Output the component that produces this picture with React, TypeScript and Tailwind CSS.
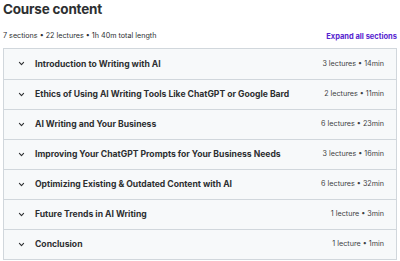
import React from "react";

const sections = [
  { title: "Introduction to Writing with AI", meta: "3 lectures • 14min" },
  { title: "Ethics of Using AI Writing Tools Like ChatGPT or Google Bard", meta: "2 lectures • 11min" },
  { title: "AI Writing and Your Business", meta: "6 lectures • 23min" },
  { title: "Improving Your ChatGPT Prompts for Your Business Needs", meta: "3 lectures • 16min" },
  { title: "Optimizing Existing & Outdated Content with AI", meta: "6 lectures • 32min" },
  { title: "Future Trends in AI Writing", meta: "1 lecture • 3min" },
  { title: "Conclusion", meta: "1 lecture • 1min" },
];

const Chevron = () => (
  <svg width="7" height="7" viewBox="0 0 10 10" fill="none">
    <path d="M2 3.5 L5 6.5 L8 3.5" stroke="#2d2f31" strokeWidth="1.6" strokeLinecap="round" strokeLinejoin="round" />
  </svg>
);

export default function App() {
  return (
    <div className="w-[400px] h-[261px] bg-white px-[3px] text-[#2d2f31] overflow-hidden" style={{ fontFamily: "Inter, 'Liberation Sans', sans-serif" }}>
      <h2 className="text-[13.5px] font-bold leading-[18px] tracking-[-0.2px]">Course content</h2>
      <div className="flex items-end justify-between mt-[13px] h-[11px]">
        <span className="text-[7.2px] text-[#2d2f31]">7 sections • 22 lectures • 1h 40m total length</span>
        <span className="text-[7.5px] font-bold text-[#5624d0]">Expand all sections</span>
      </div>
      <div className="mt-[6px] border border-[#d1d7dc] w-[394px]">
        {sections.map((s, i) => (
          <div
            key={i}
            className={`flex items-center justify-between h-[30px] bg-[#f7f9fa] pl-[14px] pr-[12px] ${i > 0 ? "border-t border-[#d1d7dc]" : ""}`}
          >
            <div className="flex items-center gap-[10px]">
              <Chevron />
              <span className="text-[8.6px] font-bold">{s.title}</span>
            </div>
            <span className="text-[7.2px] text-[#3e4143]">{s.meta}</span>
          </div>
        ))}
      </div>
    </div>
  );
}
